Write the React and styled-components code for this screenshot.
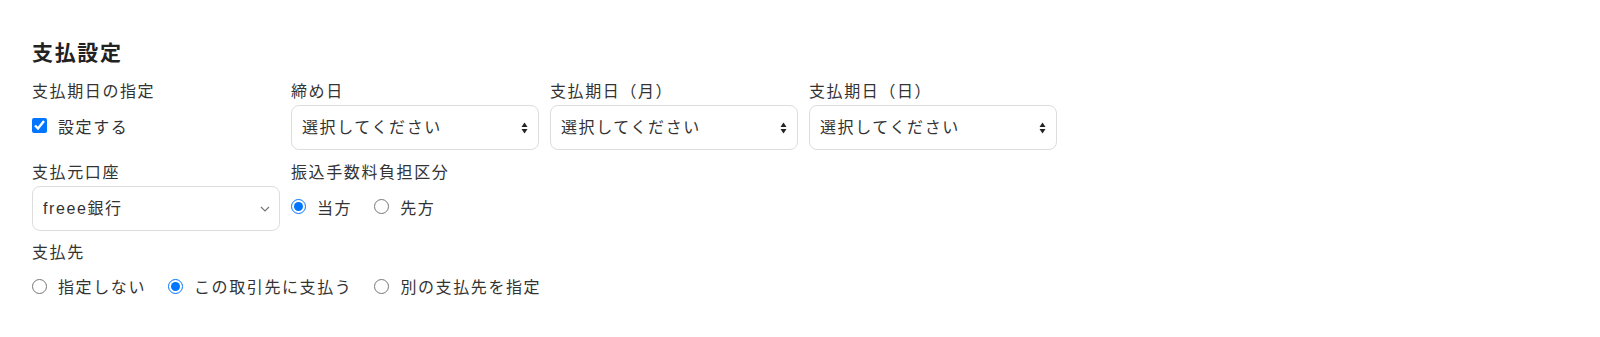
import React from "react";
import styled, { createGlobalStyle } from "styled-components";

const GlobalStyle = createGlobalStyle`
  body {
    margin: 0;
    background: #fff;
    font-family: "Liberation Sans", "Noto Sans CJK JP", sans-serif;
    letter-spacing: 0.1em;
    color: #333;
  }
`;

const Page = styled.div`
  padding: 38px 32px 20px;
`;

const Title = styled.h2`
  margin: 0 0 12px;
  font-size: 21px;
  line-height: 30px;
  font-weight: 700;
  letter-spacing: 0.08em;
  color: #222;
`;

const Row = styled.div`
  display: flex;
  gap: 11px;
  margin-bottom: ${(p) => p.spacing || "10px"};
`;

const Field = styled.div`
  width: ${(p) => (p.wide ? "auto" : "248px")};
  display: flex;
  flex-direction: column;
`;

const Label = styled.div`
  font-size: 16px;
  line-height: 24px;
  margin-bottom: 1px;
  color: #333;
`;

const SelectWrap = styled.div`
  position: relative;
  width: 100%;
`;

const Select = styled.select`
  appearance: none;
  width: 100%;
  height: 45px;
  padding: 0 30px 0 10px;
  border: 1px solid #ddd;
  border-radius: 8px;
  background: #fff;
  font-family: inherit;
  font-size: 16px;
  letter-spacing: 0.1em;
  color: #333;
  outline: none;
`;

const SelectIcon = styled.svg`
  position: absolute;
  right: ${(p) => p.right}px;
  top: 50%;
  transform: translateY(-50%);
  pointer-events: none;
`;

const InlineGroup = styled.div`
  display: flex;
  align-items: center;
  gap: 22px;
  height: ${(p) => p.height || "24px"};
`;

const Option = styled.label`
  display: flex;
  align-items: center;
  gap: 11px;
  font-size: 16px;
  color: #333;
  cursor: pointer;
`;

const Check = styled.input`
  margin: 0;
  width: 15px;
  height: 15px;
  accent-color: #0075ff;
`;

const UpDown = () => (
  <SelectIcon right={11} width="7" height="13" viewBox="0 0 7 13">
    <path d="M3.5 1 L6.5 5.5 H0.5 Z" fill="#222" />
    <path d="M3.5 12 L6.5 7.5 H0.5 Z" fill="#222" />
  </SelectIcon>
);

const Chevron = () => (
  <SelectIcon right={10} width="10" height="6" viewBox="0 0 10 6">
    <path d="M1 1 L5 5 L9 1" fill="none" stroke="#777" strokeWidth="1.2" />
  </SelectIcon>
);

const DropDown = ({ value, chevron }) => (
  <SelectWrap>
    <Select defaultValue={value}>
      <option value={value}>{value}</option>
    </Select>
    {chevron ? <Chevron /> : <UpDown />}
  </SelectWrap>
);

const App = () => (
  <>
    <GlobalStyle />
    <Page>
      <Title>支払設定</Title>

      <Row spacing="11px">
        <Field>
          <Label>支払期日の指定</Label>
          <InlineGroup height="41px">
            <Option>
              <Check type="checkbox" defaultChecked />
              設定する
            </Option>
          </InlineGroup>
        </Field>
        <Field>
          <Label>締め日</Label>
          <DropDown value="選択してください" />
        </Field>
        <Field>
          <Label>支払期日（月）</Label>
          <DropDown value="選択してください" />
        </Field>
        <Field>
          <Label>支払期日（日）</Label>
          <DropDown value="選択してください" />
        </Field>
      </Row>

      <Row spacing="10px">
        <Field>
          <Label>支払元口座</Label>
          <DropDown value="freee銀行" chevron />
        </Field>
        <Field>
          <Label>振込手数料負担区分</Label>
          <InlineGroup height="41px">
            <Option>
              <Check type="radio" name="fee" defaultChecked />
              当方
            </Option>
            <Option>
              <Check type="radio" name="fee" />
              先方
            </Option>
          </InlineGroup>
        </Field>
      </Row>

      <Row>
        <Field wide>
          <Label>支払先</Label>
          <InlineGroup height="40px">
            <Option>
              <Check type="radio" name="payee" />
              指定しない
            </Option>
            <Option>
              <Check type="radio" name="payee" defaultChecked />
              この取引先に支払う
            </Option>
            <Option>
              <Check type="radio" name="payee" />
              別の支払先を指定
            </Option>
          </InlineGroup>
        </Field>
      </Row>
    </Page>
  </>
);

export default App;
